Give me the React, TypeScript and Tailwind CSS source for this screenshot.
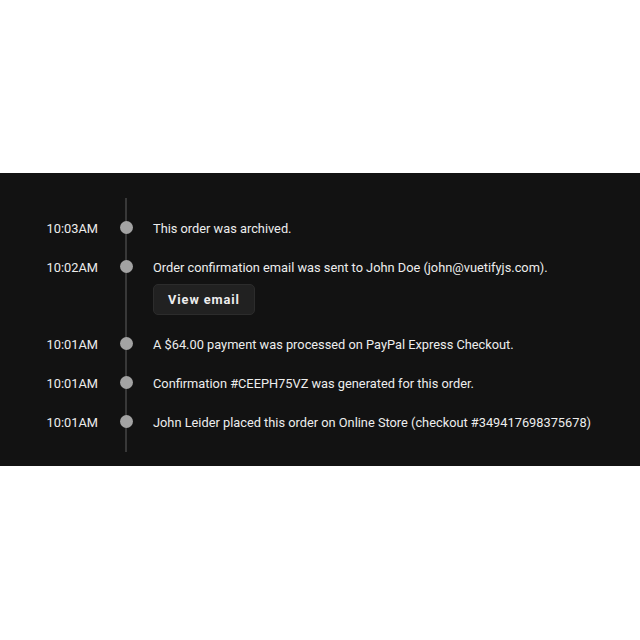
const events = [
  { time: '10:03AM', text: 'This order was archived.' },
  {
    time: '10:02AM',
    text: 'Order confirmation email was sent to John Doe (john@vuetifyjs.com).',
    action: 'View email',
  },
  { time: '10:01AM', text: 'A $64.00 payment was processed on PayPal Express Checkout.' },
  { time: '10:01AM', text: 'Confirmation #CEEPH75VZ was generated for this order.' },
  {
    time: '10:01AM',
    text: 'John Leider placed this order on Online Store (checkout #349417698375678)',
  },
];

export default function App() {
  return (
    <div className="h-[640px] bg-white pt-[173px] font-['Roboto',sans-serif]">
      <div className="bg-[#121212] pt-[25px] pb-[14px]">
        <div className="relative flex flex-col gap-[18px] pt-[20px] pb-[19px]">
          <div className="absolute left-[124.5px] top-0 bottom-0 w-[2px] bg-[#383838]" />
          {events.map((e, i) => (
            <div key={i} className="relative flex">
              <div className="w-[98px] shrink-0 pt-[1px] text-right text-[12.8px] leading-5 text-[#ededed]">
                {e.time}
              </div>
              <div className="flex w-[55px] shrink-0 justify-center pt-[3px]">
                <div className="ml-[2px] h-[12.5px] w-[12.5px] rounded-full bg-[#a3a3a3]" />
              </div>
              <div className="flex flex-col items-start pt-[1px]">
                <div className="text-[12.8px] leading-5 text-[#ededed]">{e.text}</div>
                {e.action && (
                  <button className="mt-[6px] mb-[1px] h-[31px] w-[102px] rounded-[5px] border border-[#2c2c2c] bg-[#212121] text-[12.8px] font-bold tracking-[0.07em] text-[#ededed]">
                    {e.action}
                  </button>
                )}
              </div>
            </div>
          ))}
        </div>
      </div>
    </div>
  );
}
